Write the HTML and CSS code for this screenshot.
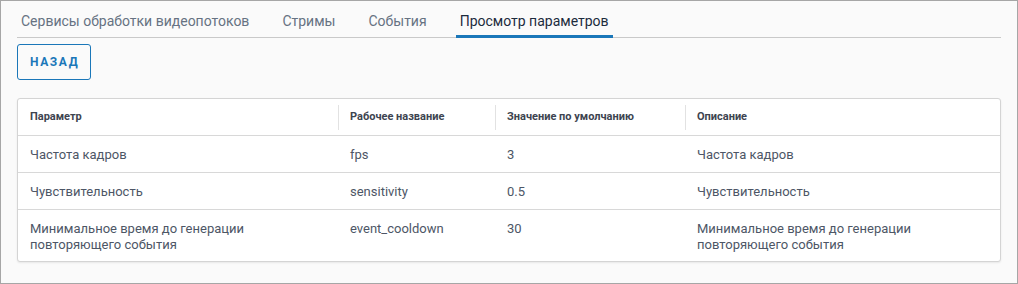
FILE: index.html
```html
<!DOCTYPE html>
<html lang="ru">
<head>
  <meta charset="UTF-8" />
  <meta name="viewport" content="width=device-width, initial-scale=1.0"/>
  <title>Просмотр параметров</title>
  <link rel="stylesheet" href="styles.css">
</head>
<body>
  <div class="frame">
    <nav class="tabs">
      <a href="#" class="tab">Сервисы обработки видеопотоков</a>
      <a href="#" class="tab">Стримы</a>
      <a href="#" class="tab">События</a>
      <a href="#" class="tab active">Просмотр параметров</a>
    </nav>

    <button class="btn-back">Назад</button>

    <div class="table-wrap">
      <table class="params">
        <colgroup>
          <col class="c1">
          <col class="c2">
          <col class="c3">
          <col class="c4">
        </colgroup>
        <thead>
          <tr>
            <th>Параметр</th>
            <th>Рабочее название</th>
            <th>Значение по умолчанию</th>
            <th>Описание</th>
          </tr>
        </thead>
        <tbody>
          <tr>
            <td>Частота кадров</td>
            <td>fps</td>
            <td>3</td>
            <td>Частота кадров</td>
          </tr>
          <tr>
            <td>Чувствительность</td>
            <td>sensitivity</td>
            <td>0.5</td>
            <td>Чувствительность</td>
          </tr>
          <tr>
            <td>Минимальное время до генерации<br>повторяющего события</td>
            <td>event_cooldown</td>
            <td>30</td>
            <td>Минимальное время до генерации<br>повторяющего события</td>
          </tr>
        </tbody>
      </table>
    </div>
  </div>
</body>
</html>
```

FILE: styles.css
```css
* {
  margin: 0;
  padding: 0;
  box-sizing: border-box;
  font-family: Roboto, 'Liberation Sans', sans-serif;
}

body {
  background-color: #fafafa;
}

.frame {
  height: 284px;
  padding: 0 16px;
  border: 1px solid #a6a6a6;
  background-color: #fafafa;
}

.tabs {
  display: flex;
  gap: 25px;
  border-bottom: 1px solid #c9c9c9;
}

.tab {
  padding: 11px 4px 5px;
  line-height: 18px;
  font-size: 14px;
  color: #667282;
  text-decoration: none;
  border-bottom: 3px solid transparent;
  margin-bottom: -1px;
}

.tab.active {
  color: #1c2b3d;
  border-bottom-color: #1a77b9;
}

.btn-back {
  display: block;
  height: 36px;
  margin-top: 6px;
  padding: 0 11px 0 12px;
  border: 1px solid #1a77b9;
  border-radius: 3px;
  background: transparent;
  color: #1a77b9;
  font-size: 12px;
  font-weight: 700;
  letter-spacing: 1.6px;
  text-transform: uppercase;
}

.table-wrap {
  margin-top: 18px;
  border: 1px solid #d4d4d4;
  border-radius: 3px;
  background-color: #fff;
  box-shadow: 0 1px 2px rgba(0, 0, 0, 0.08);
  overflow: hidden;
}

.params {
  width: 100%;
  border-collapse: collapse;
  table-layout: fixed;
}

.c1 { width: 320px; }
.c2 { width: 157px; }
.c3 { width: 190px; }

.params th {
  padding: 10px 12px;
  line-height: 16px;
  font-size: 11px;
  font-weight: 700;
  color: #3d4450;
  text-align: left;
  border-bottom: 1px solid #d8d8d8;
  background: linear-gradient(#e2e2e2, #e2e2e2) no-repeat left center / 1px 25px;
}

.params th:first-child {
  background: none;
}

.params td {
  padding: 11px 12px 9px;
  line-height: 16px;
  font-size: 13px;
  color: #4d5666;
  vertical-align: top;
  border-bottom: 1px solid #d8d8d8;
}

.params tbody tr:last-child td {
  padding-bottom: 8px;
  border-bottom: none;
}
```
